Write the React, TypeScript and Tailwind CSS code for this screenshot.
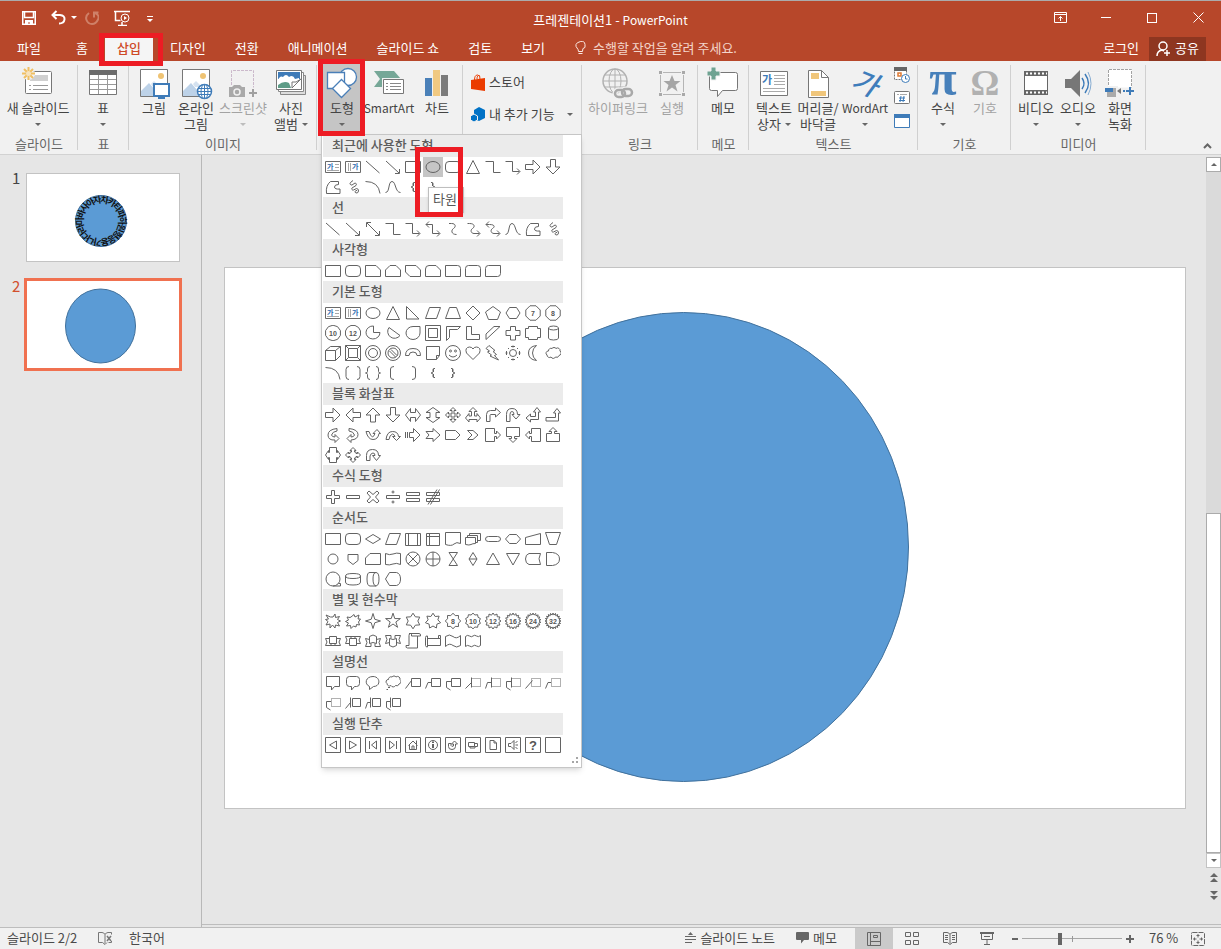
import type { ReactNode } from 'react';
import clsx from 'clsx';

/* ---------- shape gallery geometry (16x16 grid) ---------- */

type Glyph = string | { d: string; text?: string; dots?: string; solid?: string };

const star = (n: number, outer: number, inner: number, start = -90) => {
    const pts: string[] = [];
    for (let i = 0; i < n * 2; i++) {
        const a = ((start + (i * 180) / n) * Math.PI) / 180;
        const r = i % 2 ? inner : outer;
        pts.push(`${(8 + r * Math.cos(a)).toFixed(2)} ${(8 + r * Math.sin(a)).toFixed(2)}`);
    }
    return `M${pts.join('L')}z`;
};

const ngon = (n: number, r: number, start = -90) => {
    const pts = Array.from({ length: n }, (_, i) => {
        const a = ((start + (i * 360) / n) * Math.PI) / 180;
        return `${(8 + r * Math.cos(a)).toFixed(2)} ${(8 + r * Math.sin(a)).toFixed(2)}`;
    });
    return `M${pts.join('L')}z`;
};

const circle = (r: number, x = 8, y = 8) => `M${x - r} ${y}a${r} ${r} 0 1 0 ${2 * r} 0a${r} ${r} 0 1 0 ${-2 * r} 0z`;

const line = 'M1 2L14.5 14';
const arrow = 'M1 2L14 14M14.5 10v4.5h-4.5';
const elbow = 'M.5 2.5h8v11h7';
const elbowArrow = 'M.5 2.5h7v10h7M12 9.5l3 3-3 3';
const rect = 'M.5 2.5h15v11h-15z';
const ellipse = 'M1 8a7 5.5 0 1 0 14 0a7 5.5 0 1 0 -14 0z';
const roundRect = 'M4 2.5h8q3.5 0 3.5 3.5v4q0 3.5-3.5 3.5h-8q-3.5 0-3.5-3.5v-4q0-3.5 3.5-3.5z';
const triangle = 'M8 1.5L14.5 14.5H1.5z';
const rightArrow = 'M.5 5.5h7.5v-4.5l7 7-7 7v-4.5h-7.5z';
const downArrow = 'M5.5 .5v7.5h-4.5l7 7 7-7h-4.5v-7.5z';
const freeform = 'M5.5 2.5h8v3q-4 0-4 2.5t5.5 2v4.5h-13.5q-1-8 4-12z';
const scribble =
    'M8 1.5L5.5 3.5A1.5 1.5 0 0 0 7 6L10 4A1.5 1.5 0 0 1 11 6.5L7 9A1.3 1.3 0 0 0 8.5 11L11.5 9.5A2 2 0 1 1 11 14A1.2 1.2 0 1 1 12 11.5';
const arc = 'M.5 2.5q13 0 14.5 12';
const curve = 'M.5 13.5C5 13.5 3 2.5 7 2.5S10 13.5 15.5 13.5';
const leftBrace = 'M10 3.5h-1q-1 0-1 1v2q0 1.5-2 1.5q2 0 2 1.5v2q0 1 1 1h1M8.5 4v3M8.5 9v3';
const rightBrace = 'M6 3.5h1q1 0 1 1v2q0 1.5 2 1.5q-2 0-2 1.5v2q0 1-1 1h-1M7.5 4v3M7.5 9v3';
const textBox = 'TEXTBOX';
const vTextBox = 'VTEXTBOX';
const cloud =
    'M3.5 6A2.5 2.5 0 0 1 7 3.5A2.5 2.5 0 0 1 11 3.5A2.5 2.5 0 0 1 15 6A2.5 2.5 0 0 1 14 10.5A2.5 2.5 0 0 1 10.5 12A2.5 2.5 0 0 1 6 12A2.5 2.5 0 0 1 2 10A2.2 2.2 0 0 1 3.5 6z';
const data = 'M4.5 2.5h11l-4 11h-11z';
const note = 'M6.5 3.5h9v8h-9z';

const sections: { name: string; rows: Glyph[][] }[] = [
    {
        name: '최근에 사용한 도형',
        rows: [
            [textBox, vTextBox, line, arrow, rect, ellipse, roundRect, triangle, elbow, elbowArrow, rightArrow, downArrow],
            [freeform, scribble, arc, curve, leftBrace, rightBrace],
        ],
    },
    {
        name: '선',
        rows: [
            [
                line,
                arrow,
                'M2 2L14 14M14.5 10v4.5h-4.5M1.5 6v-4.5h4.5',
                elbow,
                elbowArrow,
                'M1 3.5h6.5v9h7M12 9.5l3 3-3 3M4 .5l-3 3 3 3',
                'M4 2.5h2.5C11 2.5 11 6 8.5 7.5S6 13.5 11.5 13.5',
                'M2.5 2.5h2C10 2.5 10 6 7.5 7.5S6 12.5 9 12.5h5.5M12 9.5l3 3-3 3',
                'M1 3.5h3.5C10 3.5 10 6 7.5 7.5S6 12.5 9 12.5h5.5M12 9.5l3 3-3 3M4 .5l-3 3 3 3',
                curve,
                freeform,
                scribble,
            ],
        ],
    },
    {
        name: '사각형',
        rows: [
            [
                rect,
                roundRect,
                'M.5 2.5h10.5l4.5 4.5v6.5h-15z',
                'M5 2.5h6l4.5 4.5v6.5h-15v-6.5z',
                'M.5 2.5h10.5l4.5 4.5v6.5h-10.5l-4.5-4.5z',
                'M4 2.5h7l4.5 4.5v6.5h-15v-7.5q0-3.5 3.5-3.5z',
                'M.5 2.5h12q3 0 3 3v8h-15z',
                'M3.5 2.5h9q3 0 3 3v8h-15v-8q0-3 3-3z',
                'M3.5 2.5h12v8q0 3-3 3h-12v-8q0-3 3-3z',
            ],
        ],
    },
    {
        name: '기본 도형',
        rows: [
            [
                textBox,
                vTextBox,
                ellipse,
                triangle,
                'M1.5 1.5v12.5h12.5z',
                data,
                'M4.5 2.5h7l4 11h-15z',
                'M8 1L15 8L8 15L1 8z',
                'M8 1.5L15.5 7L12.5 14.5H3.5L.5 7z',
                'M4.5 2.5h7l3.5 5.5-3.5 5.5h-7l-3.5-5.5z',
                { d: ngon(8, 7.8, 22.5), text: '7' },
                { d: ngon(8, 7.8, 22.5), text: '8' },
            ],
            [
                { d: ngon(10, 7.8), text: '10' },
                { d: ngon(12, 7.8, 15), text: '12' },
                'M8.5 1v6.5h6.5a7 6.5 0 1 1-6.5-6.5z',
                'M4 2.5a6.5 6.5 0 1 0 11 8z',
                'M15 1.5v6.5a7 6.5 0 1 1-7-6.5z',
                'M.5 .5h15v15h-15zM3.5 3.5h9v9h-9z',
                'M1.5 1.5h14l-3 3h-8v8l-3 3z',
                'M1.5 1.5h5v8h8v5h-13z',
                'M9 1.5h6l-14 13v-5.5z',
                'M5.5 1.5h5v4h4.5v5h-4.5v4.5h-5v-4.5h-4.5v-5h4.5z',
                'M3.5 1.5h9v2h3v9h-3v2h-9v-2h-3v-9h3z',
                'M3.5 3v10q0 2 5 2t5-2v-10q0-2-5-2t-5 2q0 2 5 2t5-2',
            ],
            [
                'M.5 5.5h10v10h-10zM.5 5.5l5-4h10v9l-5 5M10.5 5.5l5-4',
                'M.5 .5h15v15h-15zM3.5 3.5h9v9h-9zM.5 .5l3 3M15.5 .5l-3 3M.5 15.5l3-3M15.5 15.5l-3-3',
                circle(7.5) + circle(4.5),
                circle(7.5) + circle(5) + 'M4.5 6l6 6M6 4.5l6 6',
                'M.5 10.5q0-7 7.5-7t7.5 7h-3.5q0-3.5-4-3.5t-4 3.5z',
                'M1.5 1.5h13v9l-3 4h-10zM11.5 14.5v-4h3',
                circle(7.5) + circle(1, 5.5, 6) + circle(1, 10.5, 6) + 'M4 10q4 4 8 0',
                'M8 14.5L1.5 8q-2-5.5 3-6q2.5 0 3.5 2q1-2 3.5-2q5 .5 3 6z',
                'M4 .5l-3 3 3.5 2.5-2 1 4 3-1.5 1 8.5 4-4-4.5 2-1-3.5-3 2-1z',
                circle(3.5) + 'M8 .5v2M8 13.5v2M.5 8h2M13.5 8h2M3 3l1 1M13 3l-1 1M3 13l1-1M13 13l-1-1M6 1.5h4M6 14.5h4M1.5 6v4M14.5 6v4',
                'M11.5 .5q-8 1-8 7.5t8 7.5q-4-3-4-7.5t4-7.5z',
                cloud,
            ],
            [
                arc,
                'M4 1.5q-3 0-3 3v7q0 3 3 3M12 1.5q3 0 3 3v7q0 3-3 3',
                'M5 1.5q-2.5 0-2.5 2.5v2.5q0 1.5-2 1.5q2 0 2 1.5v2.5q0 2.5 2.5 2.5M11 1.5q2.5 0 2.5 2.5v2.5q0 1.5 2 1.5q-2 0-2 1.5v2.5q0 2.5-2.5 2.5',
                'M9 1.5q-3.5 0-3.5 2.5v8q0 2.5 3.5 2.5',
                'M7 1.5q3.5 0 3.5 2.5v8q0 2.5-3.5 2.5',
                leftBrace,
                rightBrace,
            ],
        ],
    },
    {
        name: '블록 화살표',
        rows: [
            [
                rightArrow,
                'M15.5 5.5h-7.5v-4.5l-7 7 7 7v-4.5h7.5z',
                'M5.5 15v-7h-4.5l7-7 7 7h-4.5v7z',
                downArrow,
                'M5.5 1.5l-5 6.5 5 6.5v-4h5v4l5-6.5-5-6.5v4h-5z',
                'M8 .5l-7 5h4v5h-4l7 5 7-5h-4v-5h4z',
                'M8 .5l-3 3h2v3.5h-3.5v-2l-3 3 3 3v-2h3.5v3.5h-2l3 3 3-3h-2v-3.5h3.5v2l3-3-3-3v2h-3.5v-3.5h2z',
                'M8 .5l-4 4h2.5v4.5h-2.5v-2.5l-3.5 4.5 3.5 4v-2.5h8v2.5l3.5-4-3.5-4.5v2.5h-2.5v-4.5h2.5z',
                'M1.5 14.5v-7q0-4 4-4h5v-2.5l5 4.5-5 4.5v-2.5h-4.5q-1 0-1 1v6z',
                'M1.5 14.5v-7q0-6 5.5-6t5.5 6h2.5l-4 4.5-4-4.5h2q0-3-2-3t-2 3v7z',
                'M12 .5l-3.5 4.5h2v4.5h-5v-2.5l-4.5 4 4.5 4v-2.5h8v-7.5h2z',
                'M12 1.5l-3.5 4.5h2v4.5h-9.5v3.5h12.5v-8h2z',
            ],
            [
                'M12 1.5q-9 1-9 6.5t7 5v2.5l4-4-4-4v2.5q-3 0-3.5-2q1-3.5 5.5-4z',
                'M4 1.5q9 1 9 6t-7 5.5v2.5l-4-4 4-4v2.5q3 0 3.5-2q-1-3.5-5.5-4z',
                'M1 4.5q2 8 7 8t6-6h1.5l-3.5-4-4 4h2q-1 3-2.5 3.5q-2-1-3.5-5.5z',
                'M1 12.5q1-8 6.5-8t6 5h2l-4 4-4-4h2.5q-1-2.5-2.5-2.5q-3 1-3.5 5.5z',
                'M.5 5v6M2.5 5v6M4.5 5.5h4v-4l6.5 6.5-6.5 6.5v-4h-4z',
                'M1 4.5h7v-3l7 6.5-7 6.5v-3h-7l3-3.5z',
                'M.5 3.5h10l4.5 4.5-4.5 4.5h-10z',
                'M2.5 3.5h5.5l5 4.5-5 4.5h-5.5l4.5-4.5z',
                'M.5 1.5h9v5h2v-2.5l4 4-4 4v-2.5h-2v5h-9z',
                'M1.5 .5h13v9h-5v2h2.5l-4 4-4-4h2.5v-2h-5z',
                'M15.5 1.5h-9v5h-2v-2.5l-4 4 4 4v-2.5h2v5h9z',
                'M1.5 14.5h13v-8h-5v-2h2.5l-4-4-4 4h2.5v2h-5z',
            ],
            [
                'M4.5 .5h7v5h1v-2l3 4.5-3 4.5v-2h-1v5h-7v-5h-1v2l-3-4.5 3-4.5v2h1z',
                'M8 .5l-3 3h1.5v1.5h-1.5v1.5h-1.5v-1.5l-3 3 3 3v-1.5h1.5v1.5h1.5v1.5h-1.5l3 3 3-3h-1.5v-1.5h1.5v-1.5h1.5v1.5l3-3-3-3v1.5h-1.5v-1.5h-1.5v-1.5h1.5z',
                'M1.5 13.5v-5q0-6 6-6t6 6h2l-4 5-4-5h2.5q0-2.5-2-2.5t-3 3v4.5z',
            ],
        ],
    },
    {
        name: '수식 도형',
        rows: [
            [
                'M6.5 1.5h3v5h5v3h-5v5h-3v-5h-5v-3h5z',
                'M1.5 6.5h13v3h-13z',
                'M4 2l4 3.5 4-3.5 2 2-3.5 4 3.5 4-2 2-4-3.5-4 3.5-2-2 3.5-4-3.5-4z',
                'M1.5 6.5h13v3h-13z' + circle(1, 8, 3) + circle(1, 8, 13),
                'M1.5 3.5h13v3h-13zM1.5 9.5h13v3h-13z',
                'M1.5 3.5h13v3h-13zM1.5 9.5h13v3h-13zM12 .5l-9 15M14.5 .5l-9 15',
            ],
        ],
    },
    {
        name: '순서도',
        rows: [
            [
                rect,
                roundRect,
                'M8 3.5l7.5 4.5-7.5 4.5-7.5-4.5z',
                data,
                'M.5 2.5h15v12h-15zM3.5 2.5v12M12.5 2.5v12',
                'M1.5 2.5h13v12h-13zM4.5 2.5v12M1.5 5.5h13',
                'M.5 1.5h15v11q-4-2-6.5 0.5t-8.5 .5z',
                'M.5 6.5h10v6q-3 0-4.5 1t-5.5 0zM2.5 6.5v-2h10v7h-2M4.5 4.5v-2h11v7h-3',
                'M3.5 5.5h9q3 0 3 2.5t-3 2.5h-9q-3 0-3-2.5t3-2.5z',
                'M4.5 3.5h7l4 4.5-4 4.5h-7l-4-4.5z',
                'M.5 6.5l15-4v11h-15z',
                'M.5 1.5h15l-4 12h-7z',
            ],
            [
                circle(5),
                'M3 3.5h10v6l-5 4-5-4z',
                'M5 2.5h10.5v11h-15v-6.5z',
                'M.5 2.5q4 2 7.5.5t7.5-.5v11q-4-2-7.5-.5t-7.5.5z',
                circle(7) + 'M3 3l10 10M13 3L3 13',
                circle(7) + 'M8 1v14M1 8h14',
                'M4 1.5h8.5l-8.5 13h8.5z',
                'M8 1.5l4 6.5-4 6.5-4-6.5zM4 8h8',
                'M8 2L14.5 13.5H1.5z',
                'M8 14L1.5 2.5H14.5z',
                'M4 2.5h11.5q-3 5 0 11h-11.5q-3.5-1-3.5-5.5t3.5-5.5z',
                'M1.5 1.5h6q7 1 7 6.5t-7 6.5h-6z',
            ],
            [
                circle(7) + 'M8 15h7.5v-2.5h-2',
                'M.5 5v6q0 3 7.5 3t7.5-3v-6q0-2.5-7.5-2.5t-7.5 2.5q0 2.5 7.5 2.5t7.5-2.5',
                'M5 1.5h6q3 0 3 6.5t-3 7h-6q-3 0-3-7t3-6.5M11 1.5q-3 0-3 6.5t3 7',
                'M4.5 1.5h7q4 1 4 6.5t-4 6.5h-7l-4-6.5z',
            ],
        ],
    },
    {
        name: '별 및 현수막',
        rows: [
            [
                'M8 4l2-3 .5 3.5 4-1-2 3 3 1.5-3 1.5 2 3.5-4-1-.5 3-2.5-3-2.5 3v-4l-4 1 2-3.5-2.5-2 3-.5-2.5-4 4.5 2z',
                'M6 4l3-2.5 1 2.5 4-2-1 4 2.5 0-2 3 1 3-3-.5-.5 2.5-2.5-1-2.5 2.5-.5-3-4 .5 2-3-3-1.5 3-1.5-1.5-3 3 .5z',
                star(4, 7.5, 2.5),
                star(5, 7.8, 3),
                star(6, 7.8, 4.8),
                star(7, 7.8, 5),
                { d: star(8, 7.8, 5.8), text: '8' },
                { d: star(10, 7.8, 6.3), text: '10' },
                { d: star(12, 8, 6), text: '12' },
                { d: star(16, 8, 6), text: '16' },
                { d: star(18, 8, 6), text: '24' },
                { d: star(20, 8, 6), text: '32' },
            ],
            [
                'M4.5 3.5h7v7h-7zM4.5 5.5h-4l1.5 3.5-1.5 3.5h5.5v-2M11.5 5.5h4l-1.5 3.5 1.5 3.5h-5.5v-2M6 12.5h4',
                'M4.5 5.5h7v7h-7zM4.5 10.5h-4l1.5-3.5-1.5-3.5h5.5v2M11.5 10.5h4l-1.5-3.5 1.5-3.5h-5.5v2M6 3.5h4',
                'M4.5 10.5v-7q3.5-3 7 0v7q-3.5-2-7 0zM4.5 6.5l-4-1 1.5 4-1.5 4h5.5v-3M11.5 6.5l4-1-1.5 4 1.5 4h-5.5v-3',
                'M4.5 5.5v7q3.5 3 7 0v-7q-3.5 2-7 0zM4.5 9.5l-4 1 1.5-4-1.5-4h5.5v3M11.5 9.5l4 1-1.5-4 1.5-4h-5.5v3',
                'M4 .5h10q2 0 1.5 2.5h-3v12h-10q-2 0-1.5-2.5h3v-10q0-2 1.5-2t1 2.5h6',
                'M.5 4.5q0-2 2-1.5v11q-2 0-2-1.5zM2.5 5.5h13v7h-13M15.5 5.5v-3h-2v3',
                'M.5 3.5q4-3 7.5 0t7.5-1v10q-4 3-7.5 0t-7.5 1z',
                'M.5 3.5q2-2 4-.5t3.5 0t3.5 0t4-.5v10q-2 2-4 .5t-3.5 0t-3.5 0t-4 .5z',
            ],
        ],
    },
    {
        name: '설명선',
        rows: [
            [
                'M1.5 1.5h13v10h-5l-3 3.5v-3.5h-5z',
                'M4.5 1.5h7q3 0 3 3v4q0 3-3 3h-2l-3 3.5v-3.5h-2q-3 0-3-3v-4q0-3 3-3z',
                'M4.5 11.5C-1 9 .5 1.5 8 1.5S16 11.5 8.5 11.5L4.5 14.5z',
                'M3.5 4.5A2.5 2.5 0 0 1 7 2A2.5 2.5 0 0 1 11 2A2.5 2.5 0 0 1 15 4.5A2.5 2.5 0 0 1 14 9A2.5 2.5 0 0 1 10.5 10.500A2.5 2.5 0 0 1 6 10.5A2.5 2.5 0 0 1 2 8.5A2.2 2.2 0 0 1 3.5 4.5zM3 12.5h2M1.5 14.5h1.500',
                `${note}M.5 13.5l6-8`,
                `${note}M.5 13.5l2.5-6h3.5`,
                `${note}M6.5 6.5h-5v6l4 2.5`,
                { d: 'M.5 13.5l6-6M6.5 2.5v10', dots: note },
                { d: 'M.5 13.5l2-6h4M6.5 2.5v10', dots: note },
                { d: 'M6.5 2.5v10M6.5 6.5h-5v6l4 2.5', dots: note },
                { d: 'M.5 13.5l7-8', dots: note },
                { d: 'M.5 13.5l2.5-6h3', dots: note },
            ],
            [
                { d: 'M6 6.5h-4.5v6l4 2.5', dots: note },
                'M7.5 3.5h8v8h-8zM5.5 2.5v10M.5 13.5l5-6',
                'M7.5 3.5h8v8h-8zM5.5 2.5v10M.5 13.5l2-6h3',
                'M7.5 3.5h8v8h-8zM5.5 2.5v10M5.5 6.5h-4v6l4 2.5',
            ],
        ],
    },
    {
        name: '실행 단추',
        rows: [
            [
                'M11.5 4v8L4.5 8z',
                'M4.5 4v8L11.5 8z',
                'M4.5 4v8M11.5 4v8L6.5 8z',
                'M11.5 4v8M4.5 4v8L9.5 8z',
                'M3.5 8.5L8 4l4.5 4.5M4.5 8v4.5h7v-4.5M7 12v-3h2v3M11.5 7v-3.5',
                { d: circle(4.5), solid: 'M7 7h2v4h-2zM7 4.5h2v1.5h-2z' },
                'M3.5 6.5v3q0 3 3.5 3t3.5-3v-2.5h2l-3-3-3 3h2v2q-2 1-2.5-.5v-2z',
                'M3.5 5.5h6v4h-6zM9.5 6.5h3v3h-3M5 9.5v1.5h5v-1.5',
                'M5 3.5h4l2.5 2.5v6.5h-6.5zM9 3.5v2.5h2.5',
                'M3.5 6.5h2.5l3-3v9l-3-3h-2.5zM10.5 5.5l2-1M10.5 8h2.5M10.5 10.5l2 1',
                { d: '', text: '?' },
                '',
            ].map((g) => (typeof g === 'string' ? `M.5 .5h15v15h-15z${g}` : { ...g, d: `M.5 .5h15v15h-15z${g.d}` })),
        ],
    },
];

function ShapeIcon({ glyph }: { glyph: Glyph }) {
    const g = typeof glyph === 'string' ? { d: glyph } : glyph;
    if (g.d === textBox || g.d === vTextBox) {
        const vertical = g.d === vTextBox;
        return (
            <svg width="16" height="16" viewBox="0 0 16 16" fill="none" stroke="#6a6a6a">
                <path d={rect} />
                <path stroke="#a8a8a8" d={vertical ? 'M3.5 4v8M5.5 4v8' : 'M10 5.5h4M10 8.5h4M2 11.5h12'} />
                <text x={vertical ? 7 : 2} y="10" fontSize="7" fontWeight="700" fill="#2f6cb0" stroke="none">가</text>
            </svg>
        );
    }
    return (
        <svg width="16" height="16" viewBox="0 0 16 16" fill="none" stroke="#636363">
            <path d={g.d} />
            {g.dots && <path d={g.dots} strokeDasharray="1 1" />}
            {g.solid && <path d={g.solid} fill="#636363" stroke="none" />}
            {g.text && (
                <text
                    x="8"
                    y={g.text === '?' ? 13 : 11}
                    fontSize={g.text === '?' ? 13 : 7}
                    fontWeight="700"
                    textAnchor="middle"
                    fill="#555"
                    stroke="none"
                    className="font-['Liberation_Sans',sans-serif]"
                >
                    {g.text}
                </text>
            )}
        </svg>
    );
}

function ShapeMenu() {
    return (
        <div className="absolute top-[73px] left-0 z-20 w-[261px] border border-[#c6c6c6] bg-white pl-px text-left shadow-md">
            {sections.map((section, s) => (
                <section key={section.name} className="w-[240px]">
                    <h3 className="h-[22px] bg-[#ebebeb] pl-[9px] leading-5 font-medium text-[#5c5c5c]">{section.name}</h3>
                    {section.rows.map((row, r) => (
                        <div key={r} className="grid grid-cols-12">
                            {row.map((glyph, i) => {
                                const selected = s === 0 && r === 0 && i === 5;
                                return (
                                    <button
                                        key={i}
                                        aria-label={`${section.name} ${r * 12 + i + 1}`}
                                        className={clsx('relative flex h-5 items-center justify-center', selected && 'bg-[#c5c5c5]')}
                                    >
                                        <ShapeIcon glyph={glyph} />
                                        {selected && (
                                            <>
                                                <span className="absolute top-[30px] left-[5px] z-10 w-9 border border-[#bebebe] bg-white pb-0.5 pl-1 text-left leading-[22px] text-[#575757] shadow">
                                                    타원
                                                </span>
                                                <span className="absolute -top-[10px] -left-2 z-20 h-[70px] w-12 border-5 border-[#ed1c24]" />
                                            </>
                                        )}
                                    </button>
                                );
                            })}
                        </div>
                    ))}
                </section>
            ))}
            <div className="flex h-3 items-end justify-end p-0.5">
                <svg width="8" height="8" fill="#a6a6a6">
                    <path d="M5 0h2v2h-2zM5 4h2v2h-2zM1 4h2v2h-2z" />
                </svg>
            </div>
        </div>
    );
}

/* ---------- ribbon ---------- */

const Caret = ({ className = 'text-[#666]' }: { className?: string }) => (
    <svg width="6" height="3" viewBox="0 0 6 3" fill="currentColor" className={clsx('inline-block shrink-0', className)}>
        <path d="M0 0h6L3 3z" />
    </svg>
);

const Icon32 = ({ children }: { children: ReactNode }) => (
    <svg width="32" height="32" viewBox="0 0 32 32" fill="none" className="shrink-0 overflow-visible">
        {children}
    </svg>
);

type RibbonButtonProps = {
    icon: ReactNode;
    label: string;
    second?: string;
    caret?: boolean;
    disabled?: boolean;
    className?: string;
};

function RibbonButton({ icon, label, second, caret, disabled, className }: RibbonButtonProps) {
    return (
        <button
            disabled={disabled}
            className={clsx('flex h-[73px] shrink-0 flex-col items-center pt-1.5 whitespace-nowrap', disabled && 'text-[#a3a3a3]', className)}
        >
            {icon}
            <span className={clsx('mt-px h-4 leading-4', /^[A-Z]/.test(label) && 'text-xs')}>{label}</span>
            {(second || caret) && (
                <span className="flex h-4 items-center gap-1 leading-4">
                    {second}
                    {caret && <Caret className={disabled ? 'text-[#bdbdbd]' : undefined} />}
                </span>
            )}
        </button>
    );
}

function Group({ label, className, children }: { label?: string; className: string; children: ReactNode }) {
    return (
        <div className={clsx('relative flex shrink-0 flex-col', className)}>
            <div className="flex h-[75px] pl-1">{children}</div>
            <div className="h-4 text-center leading-4 text-[#666]">{label}</div>
            <span className="absolute top-1 right-0 h-[85px] w-px bg-[#d0d0d0]" />
        </div>
    );
}

const Picture = () => (
    <>
        <path d="M2.5 2.5h27v27h-27z" fill="#fff" stroke="#777" />
        <circle cx="23" cy="9" r="3" fill="#efc373" />
        <path d="M3 29v-5l8-8 7 8v5z" fill="#bdd2e8" />
        <path d="M13 17l3-3 6 6h-7z" fill="#d5e2f0" />
    </>
);

const NewSlideIcon = () => (
    <Icon32>
        <rect x="3.5" y="4.5" width="26" height="22" rx="1" fill="#fff" stroke="#777" />
        <path d="M13 8h13v6h-18v-3z" fill="#d0d0d0" />
        <path d="M7 18.5h2M11 18.5h15M7 22.5h2M11 22.5h15" stroke="#999" />
        <path d="M6.5 0v13M0 6.5h13M2 2l9 9M11 2l-9 9" stroke="#f1f1f1" strokeWidth="4" />
        <path d="M6.5 0v13M0 6.5h13M2 2l9 9M11 2l-9 9" stroke="#f0bf62" strokeWidth="2" />
        <circle cx="6.5" cy="6.5" r="2.5" fill="#f7e3bd" />
    </Icon32>
);

const TableIcon = () => (
    <Icon32>
        <path d="M2.5 3.5h27v24h-27z" fill="#fff" stroke="#777" />
        <path d="M2 3h28v5h-28z" fill="#6b6b6b" />
        <path d="M11.5 8v19M20.5 8v19M3 12.5h26M3 17.5h26M3 22.5h26" stroke="#999" />
    </Icon32>
);

const PictureIcon = () => (
    <Icon32>
        <Picture />
        <path d="M16 17h15v12h-15z" fill="#fff" stroke="#3e7bb8" strokeWidth="2" />
        <path d="M23.5 29v2M20 31h7" stroke="#3e7bb8" strokeWidth="2" />
    </Icon32>
);

const OnlinePictureIcon = () => (
    <Icon32>
        <Picture />
        <g fill="#fff" stroke="#3e7bb8">
            <circle cx="24.5" cy="24.5" r="7" strokeWidth="1.5" />
            <ellipse cx="24.5" cy="24.5" rx="3.5" ry="7" />
            <path d="M24.5 17.5v14M18 21.5h13M18 27.5h13M17.5 24.5h14" />
        </g>
    </Icon32>
);

const ScreenshotIcon = () => (
    <Icon32>
        <path d="M4.5 18v-14.5h22v17" stroke="#cbb9cb" strokeDasharray="3 1" />
        <path d="M2 20h3l2-2h6l2 2h3v10h-16z" fill="#a9a9a9" />
        <circle cx="10" cy="25" r="3" fill="#a9a9a9" stroke="#f1f1f1" strokeWidth="1.5" />
        <path d="M26 22v8M22 26h8" stroke="#a0a0a0" strokeWidth="2" />
    </Icon32>
);

const AlbumIcon = () => (
    <Icon32>
        <path d="M5.5 8.5h25v19h-25z" fill="#ddd" stroke="#888" />
        <path d="M3.5 5.5h25v19h-25z" fill="#fff" stroke="#888" />
        <path d="M1.5 3.5h25v19h-25z" fill="#fff" stroke="#777" />
        <path d="M3 5h22v7h-22z" fill="#3e7bb8" />
        <path d="M3 13q2-5 5-3q3-4 6 0q4-3 6 2l4-1v4h-21z" fill="#fff" />
        <path d="M3 18q6-5 11-2l2 5h-13z" fill="#5e9c87" />
        <path d="M26 12l-9 9v-6h4z" fill="#fff" stroke="#777" />
    </Icon32>
);

const ShapesIcon = () => (
    <Icon32>
        <g fill="#fff" stroke="#4a7fb8" strokeWidth="1.3">
            <circle cx="22" cy="10" r="8.5" />
            <path d="M1.5 5.5h17v16h-17z" />
            <path d="M15.5 12.5l9 9-9 9-9-9z" />
        </g>
    </Icon32>
);

const SmartArtIcon = () => (
    <Icon32>
        <path d="M1 4h20l7 8-7 8h-20l6-8z" fill="#76a797" />
        <path d="M10.5 12.5h20v14h-20z" fill="#fff" stroke="#f1f1f1" strokeWidth="3" />
        <path d="M10.5 12.5h20v14h-20z" fill="#fff" stroke="#777" />
        <path d="M13 16.5h2M17 16.5h11M13 19.5h2M17 19.5h11M13 22.5h2M17 22.5h11" stroke="#888" />
    </Icon32>
);

const ChartIcon = () => (
    <Icon32>
        <path d="M4 11h7v18h-7z" fill="#4a80b8" />
        <path d="M12 3h7v26h-7z" fill="#f0c982" />
        <path d="M20 8h7v21h-7z" fill="#7b7b7b" />
    </Icon32>
);

const LinkIcon = () => (
    <Icon32>
        <g stroke="#b1b1b1">
            <circle cx="13" cy="14" r="12" strokeWidth="1.5" />
            <ellipse cx="13" cy="14" rx="6" ry="12" />
            <path d="M13 2v24M1 14h24M3 8h20M3 20h20" />
        </g>
        <g stroke="#f1f1f1" strokeWidth="5">
            <rect x="13" y="23" width="10" height="7" rx="3.5" />
            <rect x="20" y="22" width="10" height="7" rx="3.5" />
        </g>
        <g stroke="#a9a9a9" strokeWidth="2.5">
            <rect x="13" y="23" width="10" height="7" rx="3.5" />
            <rect x="20" y="22" width="10" height="7" rx="3.5" />
        </g>
    </Icon32>
);

const ActionIcon = () => (
    <Icon32>
        <path d="M4.5 5.5h23v22h-23z" stroke="#b5b5b5" />
        <path d="M3 4h4v4h-4zM25 4h4v4h-4zM3 25h4v4h-4zM25 25h4v4h-4z" fill="#f1f1f1" />
        <path d="M3 4h3v3h-3zM26 4h3v3h-3zM3 26h3v3h-3zM26 26h3v3h-3z" fill="#a9a9a9" />
        <path d="M16 8l2.5 6h6l-5 4 2 6.5-5.5-4-5.5 4 2-6.5-5-4h6z" fill="#a5a5a5" />
    </Icon32>
);

const CommentIcon = () => (
    <Icon32>
        <path d="M4.5 5.5h24q2 0 2 2v14q0 2-2 2h-13l-5 6v-6h-6q-2 0-2-2v-14q0-2 2-2z" fill="#fff" stroke="#777" />
        <path d="M4 0h5v4h4v5h-4v4h-5v-4h-4v-5h4z" fill="#6fa392" stroke="#f1f1f1" />
    </Icon32>
);

const TextBoxIcon = () => (
    <Icon32>
        <path d="M2.5 4.5h27v24h-27z" fill="#fff" stroke="#777" />
        <path d="M16 8.5h11M16 11.5h11M16 14.5h11M16 17.5h11M5 21.5h22M5 24.5h22" stroke="#aaa" />
        <text x="4" y="17" fontSize="11" fontWeight="700" fill="#3e7bb8">가</text>
    </Icon32>
);

const HeaderIcon = () => (
    <Icon32>
        <path d="M6.5 3.5h13l7 7v20h-20z" fill="#fff" stroke="#777" />
        <path d="M9 6h8v6h-8zM9 24h15v5h-15z" fill="#f0c67b" />
        <path d="M19.5 3.5v7h7" stroke="#777" />
    </Icon32>
);

const WordArtIcon = () => (
    <Icon32>
        <text x="3" y="26" fontSize="28" fontWeight="500" fontStyle="italic" fill="#3f7dbb" transform="rotate(22 16 16)">가</text>
    </Icon32>
);

const PiIcon = () => (
    <Icon32>
        <text x="16" y="28" fontSize="50" fontWeight="700" textAnchor="middle" fill="#4780ba" className="font-['Liberation_Serif',serif]">π</text>
    </Icon32>
);

const OmegaIcon = () => (
    <Icon32>
        <text x="16" y="28" fontSize="36" fontWeight="700" textAnchor="middle" fill="#b1b1b1" className="font-['Liberation_Serif',serif]">Ω</text>
    </Icon32>
);

const VideoIcon = () => (
    <Icon32>
        <path d="M4 4h24v24h-24z" fill="#666" />
        <path d="M5 9h22v14h-22z" fill="#fff" />
        <path d="M6 6.5h21M6 25.5h21" stroke="#fff" strokeWidth="2" strokeDasharray="2 2" />
    </Icon32>
);

const AudioIcon = () => (
    <Icon32>
        <path d="M3 12h6l9-9v27l-9-9h-6z" fill="#777" />
        <path d="M20 11q4 5.5 0 11M23 7q7 9.500 0 19" stroke="#3e7bb8" strokeWidth="1.5" />
        <path d="M26 5q6 11.5 0 23" stroke="#86acd2" />
    </Icon32>
);

const RecordIcon = () => (
    <Icon32>
        <path d="M4 2.5h24v18h-24z" fill="#fff" />
        <path d="M4.5 18v-15.5h23v18" stroke="#a3a3a3" strokeDasharray="3 1" />
        <path d="M0 19h14v12h-14z" fill="#f1f1f1" />
        <path d="M3 21h9v9h-9z" fill="#aaa" />
        <path d="M1 21h8v4h-8z" fill="#3e7bb8" />
        <path d="M13 24l4-3v6z" fill="#777" />
        <path d="M19 24h2M26 20v8M22 24h8" stroke="#3e7bb8" strokeWidth="2" />
    </Icon32>
);

function Ribbon() {
    return (
        <div className="flex h-[94px] shrink-0 border-b border-[#d2d2d2] bg-[#f1f1f1] text-[#444]">
            <Group label="슬라이드" className="w-[78px]">
                <RibbonButton icon={<NewSlideIcon />} label="새 슬라이드" caret className="w-[68px]" />
            </Group>
            <Group label="표" className="w-[51px]">
                <RibbonButton icon={<TableIcon />} label="표" caret className="w-[42px]" />
            </Group>
            <Group label="이미지" className="w-[188px]">
                <RibbonButton icon={<PictureIcon />} label="그림" className="w-[42px]" />
                <RibbonButton icon={<OnlinePictureIcon />} label="온라인" second="그림" className="w-[42px]" />
                <RibbonButton icon={<ScreenshotIcon />} label="스크린샷" caret disabled className="w-[52px]" />
                <RibbonButton icon={<AlbumIcon />} label="사진" second="앨범" caret className="w-[44px]" />
            </Group>
            <Group className="w-[146px]">
                <div className="relative">
                    <RibbonButton icon={<ShapesIcon />} label="도형" caret className="w-[42px] bg-[#c5c5c5]" />
                    <ShapeMenu />
                    <span className="absolute -top-0.5 -left-[3px] z-30 h-[77px] w-[47px] border-5 border-[#ed1c24]" />
                </div>
                <RibbonButton icon={<SmartArtIcon />} label="SmartArt" className="w-[52px]" />
                <RibbonButton icon={<ChartIcon />} label="차트" className="w-[44px]" />
            </Group>
            <Group className="w-[119px]">
                <div className="flex flex-1 flex-col gap-2 pt-[9px] pl-1">
                    <button className="flex h-6 items-center gap-1">
                        <svg width="14" height="17" viewBox="0 0 14 17">
                            <path d="M0 6l14-2v13l-14-2z" fill="#eb3c00" />
                            <path d="M3.5 6q0-5 3-5t2.5 4M6 5q0-4 2.5-3.5" fill="none" stroke="#eb3c00" />
                        </svg>
                        스토어
                    </button>
                    <button className="flex h-6 items-center gap-1">
                        <svg width="14" height="15" viewBox="0 0 14 15">
                            <path d="M8 0l6 3v8l-6 3-5-2v-9z" fill="#0072c6" />
                            <path d="M3 7l3.5 2v4l-3.5 2-3.5-2v-4z" fill="#0072c6" stroke="#f1f1f1" />
                        </svg>
                        내 추가 기능
                        <Caret className="ml-2 text-[#666]" />
                    </button>
                </div>
            </Group>
            <Group label="링크" className="w-[116px]">
                <RibbonButton icon={<LinkIcon />} label="하이퍼링크" disabled className="w-[64px]" />
                <RibbonButton icon={<ActionIcon />} label="실행" disabled className="w-[44px]" />
            </Group>
            <Group label="메모" className="w-[51px]">
                <RibbonButton icon={<CommentIcon />} label="메모" className="w-[42px]" />
            </Group>
            <Group label="텍스트" className="w-[169px]">
                <RibbonButton icon={<TextBoxIcon />} label="텍스트" second="상자" caret className="w-[42px]" />
                <RibbonButton icon={<HeaderIcon />} label="머리글/" second="바닥글" className="w-[46px]" />
                <RibbonButton icon={<WordArtIcon />} label="WordArt" caret className="w-[48px]" />
                <div className="flex w-[26px] flex-col items-center gap-[7px] pt-1.5">
                    <button aria-label="날짜 및 시간">
                        <svg width="16" height="16" viewBox="0 0 16 16" fill="none" className="block">
                            <path d="M.5 .5h12v12h-12z" fill="#fff" stroke="#777" strokeDasharray="2 1" />
                            <path d="M0 0h13v4h-13z" fill="#666" />
                            <path d="M4 6h3v3h-3z" stroke="#e07b34" strokeWidth="1.5" />
                            <circle cx="11.5" cy="11.5" r="4" fill="#fff" stroke="#3e7bb8" />
                            <path d="M11.5 9v3h2" stroke="#3e7bb8" />
                        </svg>
                    </button>
                    <button aria-label="슬라이드 번호">
                        <svg width="16" height="16" viewBox="0 0 16 16" fill="none" className="block">
                            <rect x=".5" y="1.5" width="15" height="12" rx="1" fill="#fff" stroke="#777" />
                            <path d="M3 4.5h2M6 4.5h7" stroke="#aaa" />
                            <path d="M7 6l-1 6M10 6l-1 6M5 8h6M5 10.5h6" stroke="#3e7bb8" />
                        </svg>
                    </button>
                    <button aria-label="개체">
                        <svg width="16" height="16" viewBox="0 0 16 16" fill="none" className="block">
                            <path d="M.5 1.5h15v13h-15z" fill="#fff" stroke="#3e7bb8" />
                            <path d="M0 1h16v4h-16z" fill="#3e7bb8" />
                        </svg>
                    </button>
                </div>
            </Group>
            <Group label="기호" className="w-[93px]">
                <RibbonButton icon={<PiIcon />} label="수식" caret className="w-[42px]" />
                <RibbonButton icon={<OmegaIcon />} label="기호" disabled className="w-[42px]" />
            </Group>
            <Group label="미디어" className="w-[135px]">
                <RibbonButton icon={<VideoIcon />} label="비디오" caret className="w-[42px]" />
                <RibbonButton icon={<AudioIcon />} label="오디오" caret className="w-[42px]" />
                <RibbonButton icon={<RecordIcon />} label="화면" second="녹화" className="w-[42px]" />
            </Group>
            <button aria-label="리본 메뉴 축소" className="mr-2 mb-1 ml-auto self-end">
                <svg width="11" height="8" viewBox="0 0 11 8" fill="none" stroke="#666" strokeWidth="2">
                    <path d="M2 6l3.500-3.500L9 6" />
                </svg>
            </button>
        </div>
    );
}

/* ---------- window chrome ---------- */

function TitleBar() {
    return (
        <header className="grid h-[33px] shrink-0 grid-cols-[1fr_auto_1fr] items-center">
            <div className="flex items-center pl-[22px]">
                <button aria-label="저장">
                    <svg width="14" height="14" viewBox="0 0 14 14" fill="none" stroke="#fff" strokeWidth="1.5">
                        <path d="M.75 .75h12.5v12.5h-12.5z" />
                        <path d="M2.5 1v5.5h9v-5.5" />
                        <path d="M3 9h8v4.5h-3v-2h-2v2h-3z" fill="#fff" stroke="none" />
                    </svg>
                </button>
                <button aria-label="실행 취소" className="ml-[15px] flex items-center gap-[5px]">
                    <svg width="15" height="15" viewBox="0 0 15 15" fill="none" stroke="#fff" strokeWidth="2">
                        <path d="M5.5 1L1.5 5l4 4M2 5h7q5 .5 4.5 4.5t-5.5 4" />
                    </svg>
                    <Caret className="text-white" />
                </button>
                <button aria-label="다시 실행" disabled className="ml-2">
                    <svg width="14" height="15" viewBox="0 0 14 15" fill="none" stroke="#cf8068" strokeWidth="2">
                        <path d="M4 3q-4 3-2.5 7t5.5 4t6-4.5t-3-6.5M9 7.5v-5h4.5" />
                    </svg>
                </button>
                <button aria-label="슬라이드 쇼 시작" className="ml-[15px]">
                    <svg width="17" height="16" viewBox="0 0 17 16" fill="none" stroke="#fff">
                        <path d="M0 1.5h16M1.5 2v8.5h5M8 12v3M4 15.5h9" strokeWidth="1.5" />
                        <circle cx="11" cy="8" r="4" />
                        <path d="M10 6v4l3-2z" fill="#fff" stroke="none" />
                    </svg>
                </button>
                <button aria-label="빠른 실행 도구 모음 사용자 지정" className="ml-4 flex flex-col items-center gap-0.5 pt-0.5">
                    <span className="h-px w-1.5 bg-white" />
                    <Caret className="text-white" />
                </button>
            </div>
            <h1 className="pt-1">
                프레젠테이션1 - <span className="text-xs">PowerPoint</span>
            </h1>
            <div className="flex justify-end">
                <button aria-label="리본 메뉴 표시 옵션" className="flex h-8 w-[46px] items-center justify-center">
                    <svg width="13" height="11" viewBox="0 0 13 11" fill="none" stroke="#fff">
                        <path d="M.5 .5h12v10h-12zM.5 2.5h12M6.5 9v-4.5M4.5 6.5l2-2 2 2" />
                    </svg>
                </button>
                <button aria-label="최소화" className="flex h-8 w-[46px] items-center justify-center">
                    <span className="h-px w-2.5 bg-white" />
                </button>
                <button aria-label="최대화" className="flex h-8 w-[46px] items-center justify-center">
                    <span className="size-2.5 border border-white" />
                </button>
                <button aria-label="닫기" className="flex h-8 w-[46px] items-center justify-center">
                    <svg width="11" height="11" viewBox="0 0 11 11" stroke="#fff">
                        <path d="M.5 .5l10 10M10.5 .5l-10 10" />
                    </svg>
                </button>
            </div>
        </header>
    );
}

const tabs = ['홈', '삽입', '디자인', '전환', '애니메이션', '슬라이드 쇼', '검토', '보기'];

function TabBar() {
    return (
        <nav className="flex h-[27px] shrink-0 items-end whitespace-nowrap">
            <button className="h-[23px] w-[58px] pb-[3px] leading-5">파일</button>
            <div className="ml-1.5 flex gap-[5px]">
                {tabs.map((tab) => (
                    <button
                        key={tab}
                        className={clsx('relative h-[23px] px-3 pb-[3px] leading-5', tab === '삽입' && 'bg-[#f5f5f5] font-medium text-[#cf4a27]')}
                    >
                        {tab}
                        {tab === '삽입' && <span className="absolute -top-[5px] -left-1.5 z-30 h-[33px] w-16 border-5 border-[#ed1c24]" />}
                    </button>
                ))}
            </div>
            <label className="ml-[18px] flex h-[23px] items-center gap-[7px] pb-[3px]">
                <svg width="11" height="14" viewBox="0 0 11 14" fill="none" stroke="#fbe9e3">
                    <path d="M3.500 10.500q0-2-1.500-3.500t-1-3.500t4.500-3t4.500 3t-1 3.500t-1.500 3.500zM3.500 12.500h4" />
                </svg>
                <input
                    aria-label="수행할 작업"
                    placeholder="수행할 작업을 알려 주세요."
                    className="w-40 bg-transparent leading-5 outline-none placeholder:text-[#f3d5cb]"
                />
            </label>
            <button className="ml-auto h-[23px] pb-[3px] leading-5">로그인</button>
            <button className="mr-[15px] ml-2.5 flex h-6 items-center gap-1 bg-[#8e3620] px-[7px]">
                <svg width="15" height="16" viewBox="0 0 15 16" fill="none" stroke="#fff" strokeWidth="1.5">
                    <circle cx="7" cy="5" r="4" />
                    <path d="M1 15q0-5 5-6l2 1M11 9v6M8 12h6" />
                </svg>
                <span className="pb-0.5">공유</span>
            </button>
        </nav>
    );
}

/* ---------- work area ---------- */

const ring = '가나다라마바사아자차카타파하원형응용';

function Thumbnails() {
    return (
        <aside className="w-[202px] shrink-0 border-r border-[#b8b8b8] pt-[18px]">
            <ol className="text-[15px] leading-4">
                <li className="flex h-[105px] pl-3">
                    <span className="mt-[-3px] w-3.5 text-[#444]">1</span>
                    <button aria-label="슬라이드 1" className="h-[89px] w-[154px] border border-[#c3c3c3] bg-white">
                        <svg viewBox="0 0 152 87" className="block w-full">
                            <circle cx="74" cy="47" r="25.5" fill="#5b9bd5" stroke="#3d6b98" />
                            {[...ring].map((ch, i) => (
                                <text
                                    key={i}
                                    x="74"
                                    y="29"
                                    fontSize="9"
                                    fontWeight="700"
                                    textAnchor="middle"
                                    fill="#111"
                                    transform={`rotate(${190 + i * 20} 74 47)`}
                                >
                                    {ch}
                                </text>
                            ))}
                        </svg>
                    </button>
                </li>
                <li className="flex pl-3">
                    <span className="w-3 text-[#d24f2d]">2</span>
                    <button aria-label="슬라이드 2" className="h-[93px] w-[158px] border-3 border-[#f07150] bg-white">
                        <svg viewBox="0 0 152 87" className="block w-full">
                            <ellipse cx="73.5" cy="45" rx="35" ry="37" fill="#5b9bd5" stroke="#41719c" />
                        </svg>
                    </button>
                </li>
            </ol>
        </aside>
    );
}

function ScrollBar() {
    return (
        <div className="flex w-[15px] shrink-0 flex-col pt-0.5 text-[#666]">
            <button aria-label="위로" className="flex h-[15px] items-center justify-center border border-[#ababab] bg-white">
                <Caret className="rotate-180" />
            </button>
            <div className="flex flex-1 flex-col justify-end bg-[#dadada]">
                <div className="h-1/2 border border-[#ababab] bg-white" />
            </div>
            <button aria-label="아래로" className="flex h-[15px] items-center justify-center border border-[#c3c3c3] bg-white">
                <Caret />
            </button>
            <button aria-label="이전 슬라이드" className="flex h-[18px] items-center justify-center">
                <svg width="8" height="9" fill="#666">
                    <path d="M0 4L4 0l4 4zM0 9l4-4 4 4z" />
                </svg>
            </button>
            <button aria-label="다음 슬라이드" className="mb-5 flex h-[18px] items-center justify-center">
                <svg width="8" height="9" fill="#666">
                    <path d="M0 0l4 4 4-4zM0 5l4 4 4-4z" />
                </svg>
            </button>
        </div>
    );
}

function StatusBar() {
    return (
        <footer className="flex h-[22px] shrink-0 items-center border-t border-[#bdbdbd] bg-[#f1f1f1] pl-[7px] whitespace-nowrap text-[#4a4a4a]">
            <span className="w-[91px] pb-0.5">슬라이드 2/2</span>
            <button aria-label="맞춤법 검사">
                <svg width="15" height="13" viewBox="0 0 15 13" fill="none" stroke="#777">
                    <path d="M7 2.500q-1-2-3-2h-3.500v10h4l2.500 2 2-2M7 2.500v9M7 2.500q1-2 3-2h3.500v2M13.500 9v1.500h-3" />
                    <path d="M9 4l4 5M13 4l-4 5" strokeWidth="1.5" />
                </svg>
            </button>
            <button className="ml-4 pb-0.5">한국어</button>

            <button className="ml-auto flex items-center gap-1 pb-0.5">
                <svg width="11" height="11" viewBox="0 0 11 11" fill="none" stroke="#666">
                    <path d="M0 4.5h11M0 7.5h11M0 10.5h7" />
                    <path d="M3 3l2.500-3 2.500 3z" fill="#666" stroke="none" />
                </svg>
                슬라이드 노트
            </button>
            <button className="ml-[21px] flex items-center gap-1 pb-0.5">
                <svg width="13" height="13" viewBox="0 0 13 13" fill="#666">
                    <path d="M1 1h11q1 0 1 1v6q0 1-1 1h-4l-3 3.500v-3.500h-4q-1 0-1-1v-6q0-1 1-1z" />
                </svg>
                메모
            </button>
            <button aria-label="기본" className="ml-[18px] flex h-[21px] w-[38px] items-center justify-center bg-[#cacaca]">
                <svg width="14" height="14" viewBox="0 0 14 14" fill="none" stroke="#666">
                    <path d="M.5 .5h13v13h-13zM3.500 .5v13M3.500 9.500h10M6.500 3.500h4v2h-4z" />
                </svg>
            </button>
            <button aria-label="여러 슬라이드" className="flex h-[21px] w-[38px] items-center justify-center">
                <svg width="14" height="14" viewBox="0 0 14 14" fill="none" stroke="#666">
                    <path d="M.5 .5h5v4h-5zM8.500 .5h5v4h-5zM.5 8.500h5v4h-5zM8.500 8.500h5v4h-5z" />
                </svg>
            </button>
            <button aria-label="읽기용 보기" className="flex h-[21px] w-[37px] items-center justify-center">
                <svg width="14" height="13" viewBox="0 0 14 13" fill="none" stroke="#666">
                    <path d="M7 2.500q-1-2-3-2h-3.500v10h4l2.500 2 2.500-2h4v-10h-3.500q-2 0-3 2v9M2 3.500h3M2 5.500h3M2 7.500h3M9 3.500h3M9 5.500h3M9 7.500h3" />
                </svg>
            </button>
            <button aria-label="슬라이드 쇼" className="flex h-[21px] w-[38px] items-center justify-center">
                <svg width="14" height="13" viewBox="0 0 14 13" fill="none" stroke="#666">
                    <path d="M0 1h14" strokeWidth="2" />
                    <path d="M1.500 2v5.500h11v-5.500M4 4.500h6M7 8v4M4 12.500h6" />
                </svg>
            </button>
            <button aria-label="축소" className="ml-1.5 h-[21px] w-1.5">
                <span className="block h-0.5 bg-[#666]" />
            </button>
            <div className="relative ml-1 flex w-[100px] items-center">
                <input
                    type="range"
                    aria-label="확대/축소"
                    min={0}
                    max={100}
                    defaultValue={38}
                    className="h-3 w-full appearance-none bg-[linear-gradient(#a8a8a8,#a8a8a8)] bg-[length:100%_1px] bg-center bg-no-repeat [&::-webkit-slider-thumb]:h-3 [&::-webkit-slider-thumb]:w-1 [&::-webkit-slider-thumb]:appearance-none [&::-webkit-slider-thumb]:bg-[#666]"
                />
                <span className="absolute left-1/2 h-1.5 w-px bg-[#999]" />
            </div>
            <button aria-label="확대" className="ml-1 flex h-[21px] w-2 items-center">
                <svg width="8" height="8" stroke="#666" strokeWidth="2">
                    <path d="M4 0v8M0 4h8" />
                </svg>
            </button>
            <button className="ml-[15px] w-[42px] pb-0.5 text-left">76 %</button>
            <button aria-label="현재 창 크기에 맞춤" className="mr-4">
                <svg width="14" height="14" viewBox="0 0 14 14" fill="none" stroke="#666">
                    <rect x=".5" y=".5" width="13" height="13" rx="1" strokeDasharray="5 1" />
                    <path d="M7 2v3.500M7 8.500v3.500M2 7h3.500M8.500 7h3.500M5.500 3.500h3M5.500 10.500h3M3.500 5.500v3M10.500 5.500v3" />
                </svg>
            </button>
        </footer>
    );
}

export default function App() {
    return (
        <div className="flex h-screen flex-col overflow-hidden bg-[#e6e6e6] font-['Noto_Sans_CJK_KR','Open_Sans',sans-serif] text-[13px] leading-4">
            <div className="shrink-0 border-t border-[#ababab] bg-[#b7472a] text-white">
                <TitleBar />
                <TabBar />
            </div>
            <Ribbon />
            <div className="flex min-h-0 flex-1">
                <Thumbnails />
                <div className="mb-0.5 flex min-w-0 flex-1 border-b border-[#bdbdbd]">
                    <main className="min-w-0 flex-1 pt-28 pr-5 pl-[22px]">
                        <div className="border border-[#c3c3c3] bg-white">
                            <svg viewBox="0 0 960 540" className="block w-full">
                                <ellipse cx="458.5" cy="279" rx="225" ry="234.5" fill="#5b9bd5" stroke="#41719c" />
                            </svg>
                        </div>
                    </main>
                    <ScrollBar />
                </div>
            </div>
            <StatusBar />
        </div>
    );
}
